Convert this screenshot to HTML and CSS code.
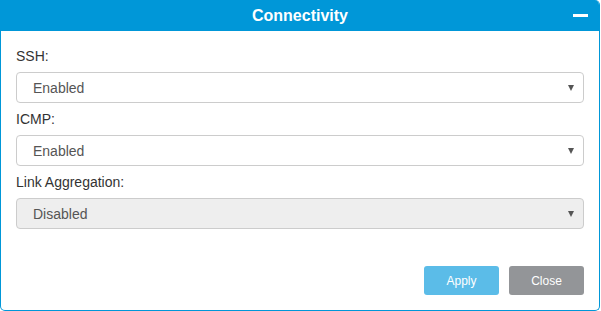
FILE: index.html
```html
<!DOCTYPE html>
<html lang="en">
<head>
    <meta charset="UTF-8">
    <meta name="viewport" content="width=device-width, initial-scale=1.0">
    <title>Connectivity</title>
    <link rel="stylesheet" href="styles.css">
</head>
<body>
    <div class="dialog">
        <div class="dialog-header">
            <span class="dialog-title">Connectivity</span>
            <span class="minimize"></span>
        </div>
        <form class="dialog-body">
            <div class="field">
                <label for="ssh">SSH:</label>
                <div class="select-wrap">
                    <select id="ssh">
                        <option>Enabled</option>
                        <option>Disabled</option>
                    </select>
                </div>
            </div>
            <div class="field">
                <label for="icmp">ICMP:</label>
                <div class="select-wrap">
                    <select id="icmp">
                        <option>Enabled</option>
                        <option>Disabled</option>
                    </select>
                </div>
            </div>
            <div class="field">
                <label for="lag">Link Aggregation:</label>
                <div class="select-wrap">
                    <select id="lag" disabled>
                        <option>Disabled</option>
                    </select>
                </div>
            </div>
            <div class="actions">
                <button type="button" class="btn btn-apply">Apply</button>
                <button type="button" class="btn btn-close">Close</button>
            </div>
        </form>
    </div>
</body>
</html>
```

FILE: styles.css
```css
body {
    margin: 0;
    font-family: "Liberation Sans", Arial, Helvetica, sans-serif;
    font-size: 14px;
    color: #333;
    background: #fff;
}
.dialog {
    box-sizing: border-box;
    width: 600px;
    height: 311px;
    border: 1px solid #0097d8;
    border-top: none;
    border-radius: 0 5px 5px 5px;
    display: flex;
    flex-direction: column;
    overflow: hidden;
}
.dialog-header {
    height: 31px;
    background: #0097d8;
    display: flex;
    align-items: center;
    justify-content: center;
    position: relative;
}
.dialog-title {
    color: #fff;
    font-weight: bold;
    font-size: 16px;
}
.minimize {
    position: absolute;
    right: 11px;
    top: 14px;
    width: 15px;
    height: 3px;
    background: #fff;
}
.dialog-body {
    flex: 1;
    display: flex;
    flex-direction: column;
    padding: 15px 15px 15px 15px;
}
.field {
    display: flex;
    flex-direction: column;
    height: 63px;
}
.field label {
    line-height: 20px;
    margin-bottom: 6px;
}
.select-wrap {
    position: relative;
}
.select-wrap::after {
    content: "";
    position: absolute;
    right: 10px;
    top: 13px;
    border-left: 3px solid transparent;
    border-right: 3px solid transparent;
    border-top: 6px solid #555;
    pointer-events: none;
}
select {
    -webkit-appearance: none;
    appearance: none;
    box-sizing: border-box;
    width: 100%;
    height: 31px;
    padding: 0 16px;
    border: 1px solid #ccc;
    border-radius: 4px;
    background: #fff;
    color: #555;
    font-family: inherit;
    font-size: 14px;
}
select:disabled {
    background: #eee;
    color: #555;
    opacity: 1;
}
.actions {
    margin-top: auto;
    display: flex;
    justify-content: flex-end;
    gap: 10px;
}
.btn {
    width: 75px;
    height: 29px;
    border: none;
    border-radius: 3px;
    color: #fff;
    font-family: inherit;
    font-size: 12px;
    font-weight: normal;
}
.btn-apply {
    background: #5bbce8;
}
.btn-close {
    background: #939598;
}
```
